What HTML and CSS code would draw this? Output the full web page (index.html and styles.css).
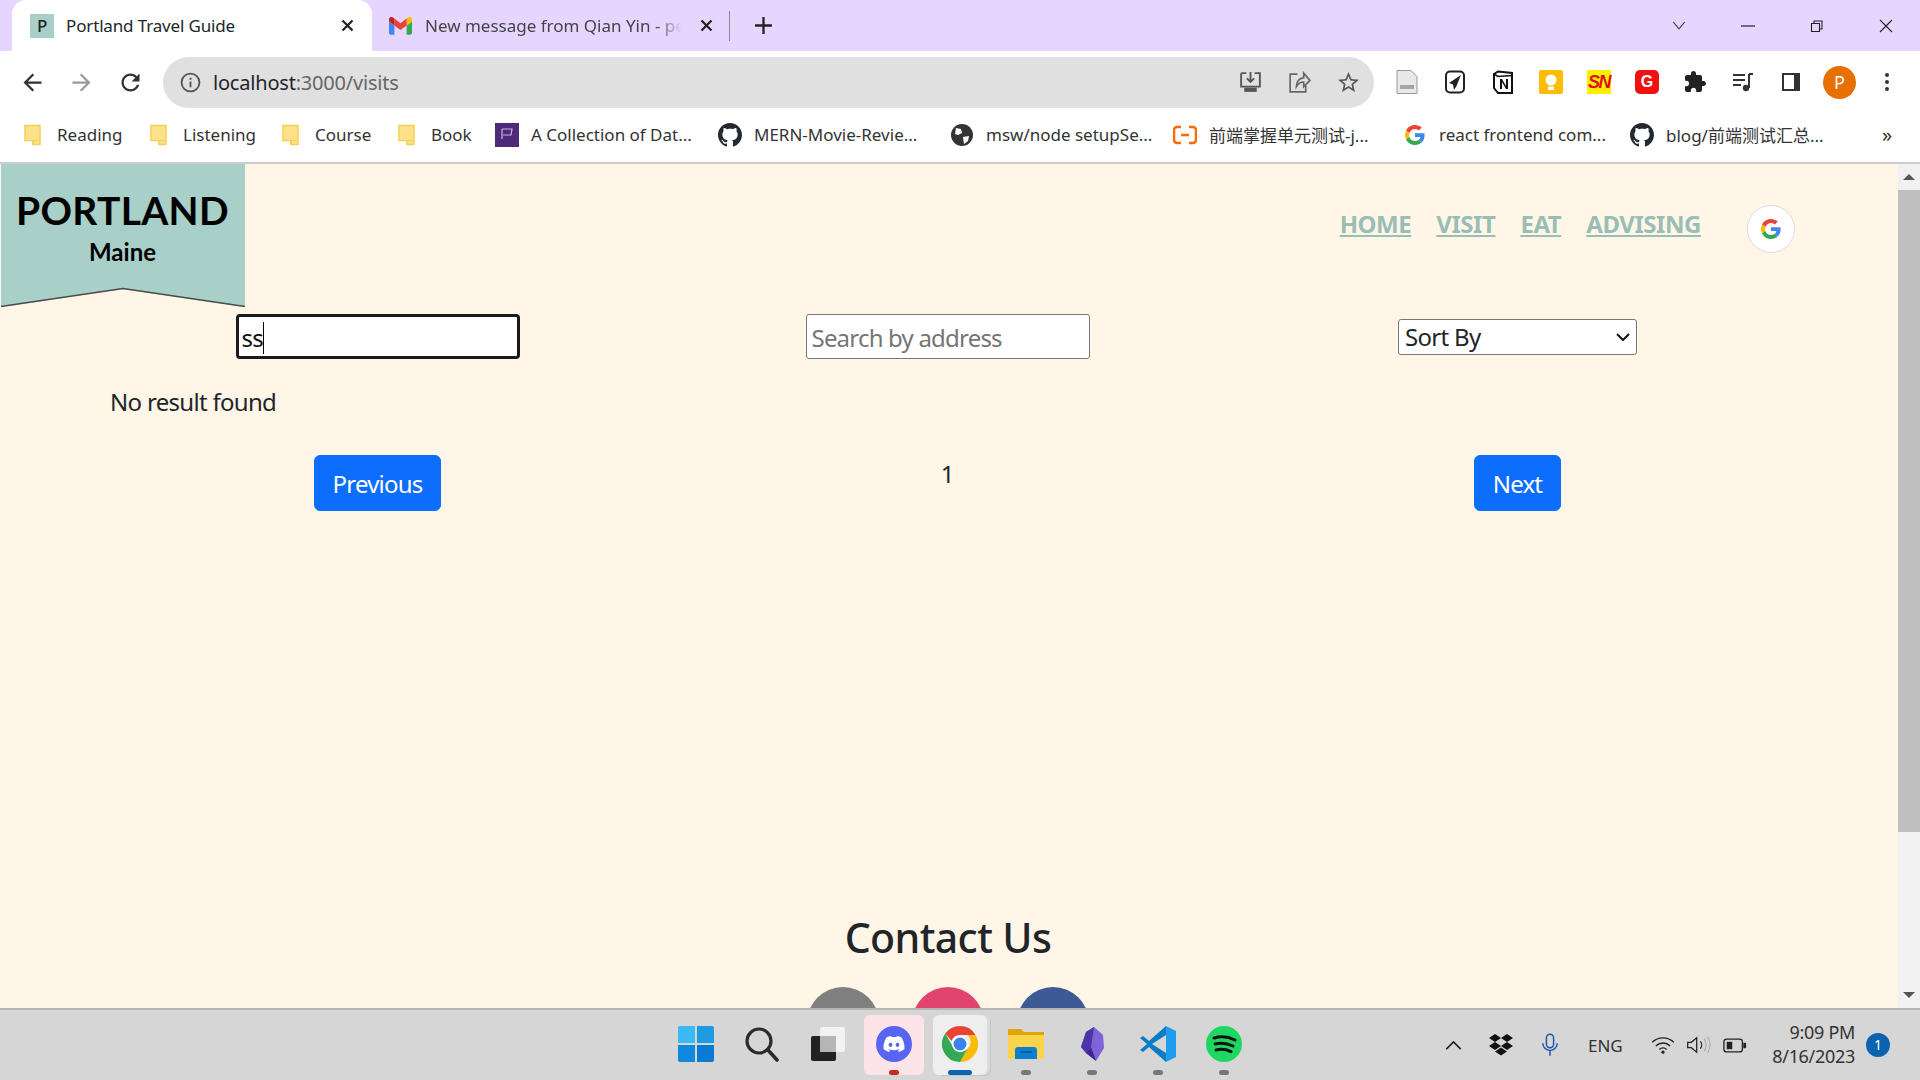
FILE: index.html
```html
<!DOCTYPE html>
<html>
	<head>
		<meta charset="utf-8" />
		<title>Portland Travel Guide</title>
		<link rel="stylesheet" href="styles.css">
	</head>
	<body>
		<svg class="defs" width="0" height="0">
			<symbol id="folder" viewBox="0 0 18 24">
				<path d="M1 2.5h16v20H9.5v-4H1z" fill="#fee28a" stroke="#f5cf52" stroke-width="1.5"/>
				<path d="M9.5 22.5l-.5-4h8" fill="none" stroke="#f5cf52" stroke-width="1"/>
			</symbol>
			<symbol id="github" viewBox="0 0 16 16">
				<path d="M8 0C3.58 0 0 3.58 0 8c0 3.54 2.29 6.53 5.47 7.59.4.07.55-.17.55-.38 0-.19-.01-.82-.01-1.49-2.01.37-2.53-.49-2.69-.94-.09-.23-.48-.94-.82-1.13-.28-.15-.68-.52-.01-.53.63-.01 1.08.58 1.23.82.72 1.21 1.87.87 2.33.66.07-.52.28-.87.51-1.07-1.78-.2-3.64-.89-3.64-3.95 0-.87.31-1.59.82-2.15-.08-.2-.36-1.02.08-2.12 0 0 .67-.21 2.2.82.64-.18 1.32-.27 2-.27.68 0 1.36.09 2 .27 1.53-1.04 2.2-.82 2.2-.82.44 1.1.16 1.92.08 2.12.51.56.82 1.27.82 2.15 0 3.07-1.87 3.75-3.65 3.95.29.25.54.73.54 1.48 0 1.07-.01 1.93-.01 2.2 0 .21.15.46.55.38A8.013 8.013 0 0016 8c0-4.42-3.58-8-8-8z" fill="#24292f"/>
			</symbol>
			<symbol id="google" viewBox="0 0 48 48">
				<path fill="#EA4335" d="M24 9.5c3.54 0 6.71 1.22 9.21 3.6l6.85-6.85C35.9 2.38 30.47 0 24 0 14.62 0 6.51 5.38 2.56 13.22l7.98 6.19C12.43 13.72 17.74 9.5 24 9.5z"/>
				<path fill="#4285F4" d="M46.98 24.55c0-1.57-.15-3.09-.38-4.55H24v9.02h12.94c-.58 2.96-2.26 5.48-4.78 7.18l7.73 6c4.51-4.18 7.09-10.36 7.09-17.65z"/>
				<path fill="#FBBC05" d="M10.53 28.59c-.48-1.45-.76-2.99-.76-4.59s.27-3.14.76-4.59l-7.98-6.19C.92 16.46 0 20.12 0 24c0 3.88.92 7.54 2.56 10.78l7.97-6.19z"/>
				<path fill="#34A853" d="M24 48c6.48 0 11.93-2.13 15.89-5.81l-7.73-6c-2.15 1.45-4.92 2.3-8.16 2.3-6.26 0-11.57-4.22-13.47-9.91l-7.98 6.19C6.51 42.62 14.62 48 24 48z"/>
			</symbol>
		</svg>

		<div class="chrome">
			<div class="tabbar">
				<div class="tab tab-active">
					<span class="favicon-p">P</span>
					<span class="tab-title">Portland Travel Guide</span>
					<svg class="tab-close" viewBox="0 0 12 12"><path d="M2 2l8 8M10 2l-8 8" stroke="#222" stroke-width="1.8"/></svg>
				</div>
				<div class="tab tab-other">
					<svg class="favicon" viewBox="0 0 24 18">
						<path d="M1.6 18h4V8.5L0 4.3v12.1C0 17.300.7 18 1.600 18z" fill="#4285f4"/>
						<path d="M18.400 18h4c.9 0 1.600-.7 1.600-1.600V4.300l-5.600 4.200z" fill="#34a853"/>
						<path d="M18.400 1.200v7.300L24 4.300V2c0-2-2.300-3.200-3.900-2z" fill="#fbbc04"/>
						<path d="M5.600 8.500V1.200L12 6l6.400-4.800v7.300L12 13.300z" fill="#ea4335"/>
						<path d="M0 2v2.300l5.600 4.200V1.200L3.900 0C2.300-1.200 0 0 0 2z" fill="#c5221f"/>
					</svg>
					<span class="tab-title tab-title-fade">New message from Qian Yin - pe</span>
					<svg class="tab-close" viewBox="0 0 12 12"><path d="M2 2l8 8M10 2l-8 8" stroke="#222" stroke-width="1.8"/></svg>
				</div>
				<span class="tab-sep"></span>
				<svg class="tab-new" viewBox="0 0 18 18"><path d="M9 1v16M1 9h16" stroke="#222" stroke-width="2.200"/></svg>
				<div class="win-controls">
					<svg viewBox="0 0 12 8"><path d="M1 1l5 6 5-6" fill="none" stroke="#444" stroke-width="1"/></svg>
					<svg viewBox="0 0 14 14"><path d="M0 7h14" stroke="#222" stroke-width="1.200"/></svg>
					<svg viewBox="0 0 14 14"><path d="M1.500 4.500h8v8h-8zM4 4.500V2h8v8H9.500" fill="none" stroke="#222" stroke-width="1.100"/></svg>
					<svg viewBox="0 0 14 14"><path d="M1 1l12 12M13 1L1 13" stroke="#222" stroke-width="1.100"/></svg>
				</div>
			</div>

			<div class="toolbar">
				<svg class="nav-btn" viewBox="0 0 24 24"><path fill="#333" d="M20 11H7.830l5.590-5.590L12 4l-8 8 8 8 1.410-1.410L7.830 13H20v-2z"/></svg>
				<svg class="nav-btn" viewBox="0 0 24 24"><path fill="#9a9a9a" d="M12 4l-1.410 1.410L16.170 11H4v2h12.170l-5.580 5.590L12 20l8-8z"/></svg>
				<svg class="nav-btn" viewBox="0 0 24 24"><path fill="#333" d="M17.650 6.350C16.200 4.900 14.210 4 12 4c-4.420 0-7.990 3.580-7.990 8s3.570 8 7.990 8c3.730 0 6.840-2.550 7.730-6h-2.080c-.82 2.330-3.040 4-5.650 4-3.310 0-6-2.690-6-6s2.690-6 6-6c1.660 0 3.140.69 4.220 1.780L13 11h7V4l-2.350 2.350z"/></svg>
				<div class="omnibox">
					<svg class="omni-info" viewBox="0 0 20 20"><circle cx="10" cy="10" r="8.500" fill="none" stroke="#555" stroke-width="1.800"/><path d="M10 9v5.500M10 5.500v1.800" stroke="#555" stroke-width="1.800"/></svg>
					<span class="url">localhost<span class="url-path">:3000/visits</span></span>
					<span class="omni-actions">
						<svg viewBox="0 0 24 24"><path d="M3 3h5M16 3h5v13H3V3M12 2v9M8.500 8l3.500 3.500L15.500 8" fill="none" stroke="#555" stroke-width="1.800"/><path d="M6 17h12v4H6z" fill="#555"/></svg>
						<svg viewBox="0 0 24 24"><path d="M10 4H3v17h15v-6M9 16c0-6 4-8.500 7-8.500V3l6 7-6 6v-4.500c-3 0-5 1-7 4.500z" fill="none" stroke="#666" stroke-width="1.600"/></svg>
						<svg viewBox="0 0 24 24"><path fill="#555" d="M22 9.240l-7.190-.62L12 2 9.190 8.630 2 9.240l5.460 4.730L5.820 21 12 17.270 18.180 21l-1.630-7.030L22 9.240zM12 15.400l-3.760 2.270 1-4.280-3.320-2.880 4.380-.38L12 6.100l1.710 4.040 4.380.38-3.320 2.880 1 4.280L12 15.400z"/></svg>
					</span>
				</div>
				<div class="ext-icons">
					<svg viewBox="0 0 24 24"><path d="M2 .5h14l6 6v17H2z" fill="#e8e8e8" stroke="#999"/><path d="M5 15h14v4H5z" fill="#a5a5a5"/></svg>
					<svg viewBox="0 0 24 24"><rect x="3" y="1.500" width="18" height="21" rx="4" fill="#fff" stroke="#222" stroke-width="2"/><path d="M18 5L6 13l4 1.500L11 20l2.500-4z" fill="#222"/></svg>
					<svg viewBox="0 0 24 24"><path d="M3 4l4-2.500 14 1.500v20H7l-4-5z" fill="#fff" stroke="#111" stroke-width="2"/><path d="M3 4l4 2.500 14-1" fill="none" stroke="#111" stroke-width="1.500"/><path d="M9 9h2l4 7V9h2v10h-2l-4-7v7H9z" fill="#111"/></svg>
					<svg viewBox="0 0 24 24"><rect x="0" width="24" height="24" rx="2" fill="#fbbc04"/><circle cx="12" cy="10" r="5.500" fill="#fff"/><path d="M9 16.500h6v3.500H9z" fill="#fff"/></svg>
					<span class="ext-sn">SN</span>
					<span class="ext-g">G</span>
					<svg viewBox="0 0 24 24"><path fill="#222" d="M20.500 11H19V7c0-1.100-.9-2-2-2h-4V3.500C13 2.120 11.880 1 10.500 1S8 2.120 8 3.500V5H4c-1.100 0-1.990.9-1.990 2v3.800H3.500c1.490 0 2.700 1.210 2.700 2.700s-1.210 2.700-2.700 2.700H2V20c0 1.100.9 2 2 2h3.800v-1.500c0-1.490 1.210-2.700 2.700-2.700 1.490 0 2.700 1.210 2.700 2.700V22H17c1.100 0 2-.9 2-2v-4h1.500c1.380 0 2.500-1.120 2.500-2.500S21.880 11 20.500 11z"/></svg>
					<svg viewBox="0 0 24 24"><path d="M2 5h12M2 10h12M2 15h8" stroke="#333" stroke-width="2"/><path d="M18 4v14" stroke="#333" stroke-width="2"/><path d="M18 4h4" stroke="#333" stroke-width="2"/><circle cx="15" cy="18" r="3.200" fill="#333"/></svg>
					<svg viewBox="0 0 24 24"><path d="M3 3h18v18H3z" fill="#fff"/><path d="M3 3h18v18H3zM5 5v14h10V5z" fill="#333" fill-rule="evenodd"/></svg>
					<span class="avatar">P</span>
					<svg viewBox="0 0 24 24"><circle cx="12" cy="5" r="2" fill="#333"/><circle cx="12" cy="12" r="2" fill="#333"/><circle cx="12" cy="19" r="2" fill="#333"/></svg>
				</div>
			</div>

			<div class="bookmarks">
				<div class="bm"><svg class="bm-icon" viewBox="0 0 18 24"><use href="#folder"/></svg><span>Reading</span></div>
				<div class="bm"><svg class="bm-icon" viewBox="0 0 18 24"><use href="#folder"/></svg><span>Listening</span></div>
				<div class="bm"><svg class="bm-icon" viewBox="0 0 18 24"><use href="#folder"/></svg><span>Course</span></div>
				<div class="bm"><svg class="bm-icon" viewBox="0 0 18 24"><use href="#folder"/></svg><span>Book</span></div>
				<div class="bm"><svg class="bm-icon bm-wide" viewBox="0 0 24 24"><path d="M0 0h24v24H0z" fill="#4f2a78"/><path d="M7 6v10M7 6h10l-1 6H8" fill="none" stroke="#c9b6dd" stroke-width="1.200"/></svg><span>A Collection of Dat...</span></div>
				<div class="bm"><svg class="bm-icon bm-wide" viewBox="0 0 16 16"><use href="#github"/></svg><span>MERN-Movie-Revie...</span></div>
				<div class="bm"><svg class="bm-icon bm-wide" viewBox="0 0 24 24"><circle cx="12" cy="12" r="11" fill="#333"/><path d="M6 5l5 1 1 4-4 2-3-1zM13 14l6-1-1 5-4 3z" fill="#fff"/></svg><span>msw/node setupSe...</span></div>
				<div class="bm"><svg class="bm-icon bm-wide" viewBox="0 0 24 24"><path d="M8 4H4a3 3 0 00-3 3v10a3 3 0 003 3h4M16 4h4a3 3 0 013 3v10a3 3 0 01-3 3h-4M8 12h8" fill="none" stroke="#ff6a00" stroke-width="2.500"/></svg><span>前端掌握单元测试-j...</span></div>
				<div class="bm"><svg class="bm-icon bm-g" viewBox="0 0 48 48"><use href="#google"/></svg><span>react frontend com...</span></div>
				<div class="bm"><svg class="bm-icon bm-wide" viewBox="0 0 16 16"><use href="#github"/></svg><span>blog/前端测试汇总...</span></div>
				<span class="bm-more">»</span>
			</div>
		</div>

		<div class="viewport">
			<div class="page">
				<header class="site-header">
					<div class="logo">
						<svg class="logo-bg" viewBox="0 0 245 143">
							<path d="M1 0h244v143l-122-18L1 143z" fill="#a8d0c8"/>
							<path d="M1 142.500l122-18 122 18" fill="none" stroke="#4a4a4a" stroke-width="1.500"/>
						</svg>
						<span class="logo-title">PORTLAND</span>
						<span class="logo-sub">Maine</span>
					</div>
					<nav class="site-nav">
						<a href="#">HOME</a>
						<a href="#">VISIT</a>
						<a href="#">EAT</a>
						<a href="#">ADVISING</a>
					</nav>
					<button class="google-btn"><svg viewBox="0 0 48 48"><use href="#google"/></svg></button>
				</header>

				<div class="filter-row">
					<div class="cell"><div class="text-input text-input-focus"><span>ss</span><i class="caret"></i></div></div>
					<div class="cell"><div class="text-input text-input-empty">Search by address</div></div>
					<div class="cell">
						<div class="sort-select">
							<span>Sort By</span>
							<svg viewBox="0 0 14 8"><path d="M1 1l6 6 6-6" fill="none" stroke="#111" stroke-width="2"/></svg>
						</div>
					</div>
				</div>

				<p class="no-result">No result found</p>

				<div class="pager">
					<div class="cell"><button class="btn">Previous</button></div>
					<div class="cell"><span class="page-num">1</span></div>
					<div class="cell"><button class="btn">Next</button></div>
				</div>

				<footer class="contact">
					<h2>Contact Us</h2>
					<div class="contact-links">
						<span class="round round-grey"></span>
						<span class="round round-pink"></span>
						<span class="round round-blue"></span>
					</div>
				</footer>
			</div>
			<div class="scrollbar">
				<span class="arrow-up"></span>
				<span class="thumb"></span>
				<span class="arrow-down"></span>
			</div>
		</div>

		<div class="taskbar">
			<div class="task-apps">
				<div class="task-app">
					<svg viewBox="0 0 36 36">
						<path d="M0 2a2 2 0 012-2h15v17H0z" fill="#3cb8f2"/>
						<path d="M19 0h15a2 2 0 012 2v15H19z" fill="#1e9be3"/>
						<path d="M0 19h17v17H2a2 2 0 01-2-2z" fill="#1089dd"/>
						<path d="M19 19h17v15a2 2 0 01-2 2H19z" fill="#0a7ad4"/>
					</svg>
				</div>
				<div class="task-app">
					<svg viewBox="0 0 36 36"><circle cx="15" cy="15" r="12" fill="none" stroke="#2b2b2b" stroke-width="3.200"/><path d="M24 24l9 10" stroke="#2b2b2b" stroke-width="3.600" stroke-linecap="round"/></svg>
				</div>
				<div class="task-app">
					<svg viewBox="0 0 36 36"><rect x="10" y="1" width="25" height="25" rx="2" fill="#f2f2f2"/><rect x="1" y="10" width="25" height="25" rx="2" fill="#222"/><rect x="10" y="10" width="16" height="16" fill="#b5b5b5"/></svg>
				</div>
				<div class="task-app task-app-alert">
					<svg viewBox="0 0 36 36"><circle cx="18" cy="18" r="18" fill="#5865f2"/><g transform="translate(7.500 7.500) scale(.875)"><path fill="#fff" d="M20.317 4.370a19.790 19.790 0 00-4.885-1.515.074.074 0 00-.079.037c-.211.375-.445.865-.608 1.250-1.845-.276-3.680-.276-5.487 0-.164-.393-.406-.874-.618-1.250a.077.077 0 00-.078-.037 19.740 19.740 0 00-4.885 1.515.07.07 0 00-.032.028C.533 9.046-.319 13.580.099 18.058a.082.082 0 00.031.056c2.053 1.508 4.041 2.423 5.993 3.030a.078.078 0 00.084-.028c.462-.63.873-1.295 1.226-1.994a.076.076 0 00-.042-.106c-.653-.248-1.274-.55-1.872-.892a.077.077 0 01-.008-.128c.126-.094.252-.192.372-.291a.074.074 0 01.078-.011c3.928 1.793 8.180 1.793 12.061 0a.074.074 0 01.079.01c.120.099.246.198.373.292a.077.077 0 01-.007.128 12.300 12.300 0 01-1.873.891.077.077 0 00-.041.107c.360.698.772 1.363 1.225 1.993a.076.076 0 00.084.029c1.961-.607 3.950-1.522 6.002-3.030a.077.077 0 00.031-.055c.500-5.177-.838-9.674-3.548-13.660a.061.061 0 00-.031-.029zM8.020 15.331c-1.183 0-2.157-1.086-2.157-2.419 0-1.333.956-2.419 2.157-2.419 1.211 0 2.176 1.095 2.157 2.419 0 1.333-.956 2.419-2.157 2.419zm7.975 0c-1.183 0-2.157-1.086-2.157-2.419 0-1.333.955-2.419 2.157-2.419 1.211 0 2.176 1.095 2.157 2.419 0 1.333-.946 2.419-2.157 2.419z"/></g></svg>
					<i class="dot dot-red"></i>
				</div>
				<div class="task-app task-app-open">
					<svg viewBox="0 0 36 36">
						<path d="M18 0a18 18 0 0115.600 9H18a9 9 0 00-8.500 6L3.300 7.500A18 18 0 0118 0z" fill="#ea4335"/>
						<path d="M33.600 9A18 18 0 0118 36l7.800-13.500a9 9 0 00-.3-13.500z" fill="#fbbc04"/>
						<path d="M18 36A18 18 0 013.300 7.500L11 21a9 9 0 0014.800 1.500z" fill="#34a853"/>
						<circle cx="18" cy="18" r="8" fill="#fff"/>
						<circle cx="18" cy="18" r="6.500" fill="#3b82f0"/>
					</svg>
					<i class="dot dot-blue"></i>
				</div>
				<div class="task-app">
					<svg viewBox="0 0 36 36"><path d="M0 3h13l3 3h20v27H0z" fill="#e0a40c"/><path d="M0 9h36v24H0z" fill="#fcd34d"/><path d="M7 33v-9a3 3 0 013-3h16a3 3 0 013 3v9z" fill="#0c7fd0"/><path d="M12 26h12" stroke="#05588f" stroke-width="1.500"/></svg>
					<i class="dot"></i>
				</div>
				<div class="task-app">
					<svg viewBox="0 0 36 36"><path d="M20 1l9 8 1 13-8 13-10-8-5-6 5-15z" fill="#7e62d8"/><path d="M20 1l-8 5-5 15 5 6 5-6z" fill="#4d35a8"/><path d="M17 21l-5 6 10 8z" fill="#3a2790"/></svg>
					<i class="dot"></i>
				</div>
				<div class="task-app">
					<svg viewBox="0 0 36 36"><path d="M26 0l10 5v26l-10 5z" fill="#1f9cf0"/><path d="M26 0v9L12 18l14 9v9L9 21l-6 5-3-2 7-6-7-6 3-2 6 5z" fill="#0a7cc4"/></svg>
					<i class="dot"></i>
				</div>
				<div class="task-app">
					<svg viewBox="0 0 36 36"><circle cx="18" cy="18" r="18" fill="#1ed760"/><path d="M8 12c7-2 14-1.500 21 2M9 18c6-1.500 12-1 18 2M10 24c5-1.200 10-.8 15 1.600" fill="none" stroke="#111" stroke-width="3" stroke-linecap="round"/></svg>
					<i class="dot"></i>
				</div>
			</div>
			<div class="tray">
				<svg class="tray-chevron" viewBox="0 0 18 10"><path d="M1 9l8-8 8 8" fill="none" stroke="#222" stroke-width="1.800"/></svg>
				<svg class="tray-dropbox" viewBox="0 0 24 22"><path fill="#111" d="M6 0l6 4-6 4-6-4zM18 0l6 4-6 4-6-4zM0 12l6-4 6 4-6 4zM18 8l6 4-6 4-6-4zM6 17.500l6-4 6 4-6 4z"/></svg>
				<svg class="tray-mic" viewBox="0 0 20 26"><rect x="6" y="1" width="8" height="15" rx="4" fill="none" stroke="#1a52a8" stroke-width="1.600"/><path d="M2 11a8 8 0 0016 0M10 19v6" fill="none" stroke="#1a52a8" stroke-width="1.600"/></svg>
				<span class="tray-lang">ENG</span>
				<svg class="tray-wifi" viewBox="0 0 26 20"><path d="M1 7a17 17 0 0124 0M5 11a11.500 11.500 0 0116 0M9 15a5.500 5.500 0 018 0" fill="none" stroke="#222" stroke-width="1.500"/><circle cx="13" cy="18" r="1.800" fill="#222"/></svg>
				<svg class="tray-vol" viewBox="0 0 26 20"><path d="M1 7h4l6-5v16l-6-5H1z" fill="none" stroke="#222" stroke-width="1.400"/><path d="M15 6a6 6 0 010 8" fill="none" stroke="#222" stroke-width="1.400"/><path d="M19 3a11 11 0 010 14M23 1a15 15 0 010 18" fill="none" stroke="#aaa" stroke-width="1.200"/></svg>
				<svg class="tray-batt" viewBox="0 0 26 16"><rect x="1" y="1" width="20" height="14" rx="3" fill="none" stroke="#222" stroke-width="1.400"/><path d="M4 4h6v8H4z" fill="#222"/><path d="M22 5h2a1 1 0 011 1v4a1 1 0 01-1 1h-2z" fill="#222"/></svg>
				<div class="tray-clock"><span>9:09 PM</span><span>8/16/2023</span></div>
				<span class="tray-badge">1</span>
			</div>
		</div>
	</body>
</html>
```
FILE: styles.css
```css
* {
	box-sizing: border-box;
}
html, body {
	margin: 0;
	height: 1080px;
	overflow: hidden;
}
body {
	display: flex;
	flex-direction: column;
	font-family: "Noto Sans", "Noto Sans CJK SC", sans-serif;
	color: #212529;
}
.defs {
	position: absolute;
}

/* browser top */
.chrome {
	height: 164px;
	background: #fff;
	border-bottom: 2px solid #ccc;
	flex: none;
}
.tabbar {
	height: 51px;
	background: #e6d5ff;
	display: flex;
	align-items: center;
}
.tab {
	display: flex;
	align-items: center;
	height: 51px;
	font-size: 17px;
	letter-spacing: -0.15px;
}
.tab-active {
	width: 360px;
	margin-left: 12px;
	padding: 0 17px 0 18px;
	background: #fff;
	border-radius: 14px 14px 0 0;
}
.tab-other {
	width: 358px;
	padding: 0 16px 0 17px;
	color: #444;
	letter-spacing: 0;
}
.favicon-p {
	width: 24px;
	height: 24px;
	background: #a8d0c8;
	color: #222;
	font-size: 17px;
	font-weight: 500;
	line-height: 24px;
	text-align: center;
	flex: none;
}
.favicon {
	width: 23px;
	height: 18px;
	flex: none;
}
.tab-title {
	margin-left: 12px;
	flex: 1;
	white-space: nowrap;
}
.tab-title-fade {
	margin-left: 13px;
	margin-right: 12px;
	-webkit-mask-image: linear-gradient(90deg, #000 88%, transparent 98%);
	mask-image: linear-gradient(90deg, #000 88%, transparent 98%);
}
.tab-close {
	width: 15px;
	height: 15px;
	flex: none;
}
.tab-sep {
	width: 1px;
	height: 30px;
	background: #888;
	margin-left: -1px;
}
.tab-new {
	width: 19px;
	height: 19px;
	margin-left: 24px;
}
.win-controls {
	margin-left: auto;
	display: flex;
	align-items: center;
	height: 42px;
	padding-right: 27px;
	gap: 55px;
}
.win-controls svg {
	width: 14px;
	height: 14px;
}
.win-controls svg:first-child {
	height: 9px;
}

.toolbar {
	height: 62px;
	display: flex;
	align-items: center;
	padding-left: 19px;
}
.nav-btn {
	width: 27px;
	height: 27px;
	margin-right: 22px;
	flex: none;
}
.nav-btn:nth-child(3) {
	margin-right: 19px;
}
.omnibox {
	width: 1211px;
	height: 51px;
	background: #e0e0e0;
	border-radius: 26px;
	display: flex;
	align-items: center;
	padding: 0 13px 0 17px;
	flex: none;
}
.omni-info {
	width: 21px;
	height: 21px;
}
.url {
	margin-left: 12px;
	font-size: 20px;
	letter-spacing: -0.2px;
}
.url-path {
	color: #666;
}
.omni-actions {
	margin-left: auto;
	display: flex;
	gap: 24px;
}
.omni-actions svg {
	width: 25px;
	height: 25px;
}
.ext-icons {
	display: flex;
	align-items: center;
	margin-left: 9px;
}
.ext-icons > * {
	width: 24px;
	height: 24px;
	margin: 0 12px;
	flex: none;
}
.ext-sn {
	background: #ffee00;
	color: #e01010;
	font: italic bold 18px/24px "Liberation Sans", sans-serif;
	text-align: center;
	letter-spacing: -1.5px;
	white-space: nowrap;
}
.ext-g {
	background: #f01010;
	color: #fff;
	font: bold 16px/24px "Liberation Sans", sans-serif;
	text-align: center;
	border-radius: 5px;
}
.ext-icons .avatar {
	width: 33px;
	height: 33px;
	margin: 0 7px 0 8px;
	background: #e87000;
	color: #fff;
	border-radius: 50%;
	font-size: 18px;
	line-height: 33px;
	text-align: center;
}
.ext-icons .avatar + svg {
	margin-left: 12px;
}

.bookmarks {
	height: 49px;
	display: grid;
	grid-template-columns: 126px 132px 116px 97px 223px 232px 223px 232px 225px 252px auto;
	align-items: center;
	padding: 0 0 6px 24px;
	font-size: 17px;
	color: #333;
}
.bm {
	display: flex;
	align-items: center;
	white-space: nowrap;
}
.bm-icon {
	width: 17px;
	height: 23px;
	margin-right: 16px;
	flex: none;
}
.bm-wide {
	width: 24px;
	height: 24px;
	margin-right: 12px;
}
.bm-g {
	width: 20px;
	height: 20px;
	margin-right: 14px;
}
.bm-more {
	font-size: 20px;
}

/* page */
.viewport {
	height: 844px;
	display: flex;
	flex: none;
	background: #fff6e7;
}
.page {
	flex: 1;
	overflow: hidden;
	font-size: 24px;
}
.site-header {
	height: 142px;
	display: flex;
	align-items: flex-start;
}
.logo {
	position: relative;
	width: 245px;
	height: 143px;
	display: flex;
	flex-direction: column;
	align-items: center;
	color: #000;
	flex: none;
}
.logo-bg {
	position: absolute;
	left: 0;
	top: 0;
	width: 245px;
	height: 143px;
}
.logo-title {
	position: relative;
	margin-top: 24px;
	font: 700 39px/44px "Lato", sans-serif;
	letter-spacing: 0.3px;
}
.logo-sub {
	position: relative;
	margin-top: 5px;
	font: 700 24px/30px "Lato", sans-serif;
}
.site-nav {
	display: flex;
	gap: 25px;
	margin-left: auto;
	margin-top: 42px;
}
.site-nav a {
	color: #9abdb6;
	font-size: 24px;
	font-weight: 700;
	line-height: 36px;
	letter-spacing: -0.45px;
	text-decoration: underline;
}
.google-btn {
	width: 48px;
	height: 48px;
	margin: 41px 103px 0 46px;
	padding: 0;
	background: #fff;
	border: 1px solid #dadce0;
	border-radius: 50%;
	display: flex;
	align-items: center;
	justify-content: center;
}
.google-btn svg {
	width: 20px;
	height: 20px;
}

.filter-row, .pager {
	display: grid;
	grid-template-columns: repeat(3, 1fr);
	padding: 0 95.5px 0 92.5px;
}
.filter-row {
	margin-top: 8px;
	height: 45px;
	align-items: center;
}
.cell {
	display: flex;
	justify-content: center;
}
.text-input {
	width: 284px;
	height: 45px;
	background: #fff;
	border: 1px solid #767676;
	border-radius: 3px;
	padding: 3px 5px 0;
	display: flex;
	align-items: center;
	line-height: 36px;
	letter-spacing: -0.8px;
}
.text-input-focus {
	border: 3px solid #1a1a1a;
	border-radius: 4px;
	padding-left: 3px;
	color: #111;
}
.text-input-empty {
	color: #757575;
}
.caret {
	width: 1px;
	height: 32px;
	background: #000;
}
.sort-select {
	width: 239px;
	height: 36px;
	background: #fff;
	border: 1px solid #767676;
	border-radius: 3px;
	padding: 0 6px 0 6px;
	display: flex;
	align-items: center;
	justify-content: space-between;
	letter-spacing: -0.7px;
}
.sort-select svg {
	width: 14px;
	height: 8px;
}
.no-result {
	margin: 25px 0 0 110px;
	line-height: 36px;
	letter-spacing: -0.7px;
}
.pager {
	margin-top: 35px;
	align-items: flex-start;
}
.btn {
	height: 56px;
	padding: 0 17.5px;
	background: #0d6efd;
	color: #fff;
	border: 1px solid #0d6efd;
	border-radius: 6px;
	font: inherit;
	letter-spacing: -0.8px;
}
.page-num {
	margin-top: 1px;
	line-height: 36px;
}
.contact {
	margin-top: 402px;
	padding-right: 2px;
	text-align: center;
}
.contact h2 {
	margin: 0;
	font-size: 41px;
	font-weight: 500;
	line-height: 48px;
	letter-spacing: -0.6px;
}
.contact-links {
	display: flex;
	justify-content: center;
	gap: 33px;
	margin-top: 26px;
}
.round {
	width: 72px;
	height: 72px;
	border-radius: 50%;
	flex: none;
}
.round-grey { background: #808080; }
.round-pink { background: #e1456f; }
.round-blue { background: #3d5a96; }

.scrollbar {
	width: 22px;
	background: #f1f1f1;
	display: flex;
	flex-direction: column;
	align-items: center;
	flex: none;
}
.arrow-up, .arrow-down {
	width: 0;
	height: 0;
	border-left: 6px solid transparent;
	border-right: 6px solid transparent;
	flex: none;
}
.arrow-up {
	margin-top: 10px;
	border-bottom: 6px solid #555;
}
.arrow-down {
	margin-top: 160px;
	border-top: 6px solid #555;
}
.thumb {
	width: 22px;
	height: 642px;
	margin-top: 10px;
	background: #c0c0c0;
	flex: none;
}

/* windows taskbar */
.taskbar {
	height: 72px;
	flex: 1;
	background: #d6d6d6;
	border-top: 2px solid #b5b5b5;
	display: flex;
	align-items: center;
}
.task-apps {
	display: flex;
	padding-left: 663px;
	align-items: center;
}
.task-app {
	position: relative;
	width: 66px;
	height: 60px;
	display: flex;
	align-items: center;
	justify-content: center;
}
.task-app svg {
	width: 36px;
	height: 36px;
	margin-bottom: 2px;
}
.task-app-alert {
	width: 60px;
	margin: 0 3px;
	background: #fce4e8;
	border-radius: 6px;
}
.task-app-open {
	width: 54px;
	margin: 0 6px;
	background: #eeeeee;
	border-radius: 6px;
	box-shadow: 3px 0 0 #dcdcdc, 4px 1px 0 #c4c4c4;
}
.dot {
	position: absolute;
	left: 50%;
	bottom: 0;
	width: 10px;
	height: 5px;
	margin-left: -5px;
	background: #777;
	border-radius: 3px;
}
.dot-red {
	background: #c42b1c;
}
.dot-blue {
	width: 24px;
	margin-left: -12px;
	background: #0a62b0;
}
.tray {
	margin-left: auto;
	display: flex;
	align-items: center;
	padding-right: 30px;
	font-size: 17px;
	color: #333;
}
.tray-chevron {
	width: 17px;
	height: 9px;
}
.tray-dropbox {
	width: 24px;
	height: 22px;
	margin-left: 27px;
}
.tray-mic {
	width: 18px;
	height: 24px;
	margin-left: 28px;
}
.tray-lang {
	margin-left: 29px;
	width: 36px;
}
.tray-wifi {
	width: 24px;
	height: 18px;
	margin-left: 27px;
}
.tray-vol {
	width: 25px;
	height: 18px;
	margin-left: 11px;
}
.tray-batt {
	width: 24px;
	height: 15px;
	margin-left: 12px;
}
.tray-clock {
	margin-left: 10px;
	width: 98px;
	margin-top: -3px;
	display: flex;
	flex-direction: column;
	align-items: flex-end;
	font-size: 18px;
	line-height: 24px;
	white-space: nowrap;
	letter-spacing: -0.3px;
}
.tray-badge {
	width: 24px;
	height: 24px;
	margin-left: 11px;
	background: #0a62b0;
	color: #fff;
	border-radius: 50%;
	font-size: 14px;
	line-height: 24px;
	text-align: center;
}
```
